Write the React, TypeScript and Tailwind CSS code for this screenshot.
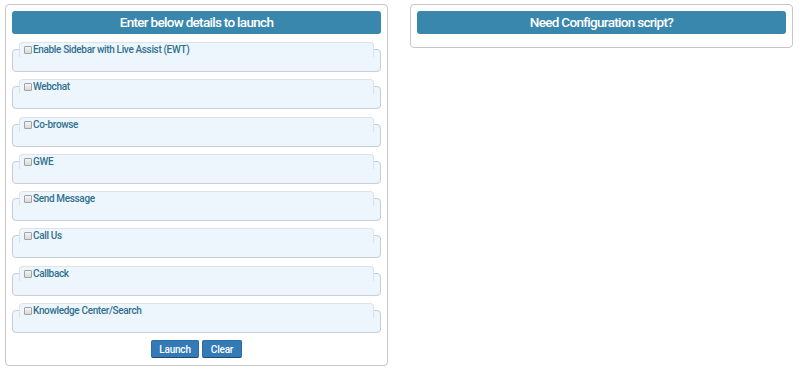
const options = [
  "Enable Sidebar with Live Assist (EWT)",
  "Webchat",
  "Co-browse",
  "GWE",
  "Send Message",
  "Call Us",
  "Callback",
  "Knowledge Center/Search",
];

function Option({ label }: { label: string }) {
  return (
    <fieldset className="mb-[7.3px] rounded-[4px] border border-[#c9ced3] bg-[#eef6fd] px-[6px]">
      <legend className="flex h-[15px] w-full items-start rounded-t-[4px] border border-b-0 border-[#dde3e8] bg-[#eef6fd] pl-[4px] pt-[1px]">
        <span className="mr-[1px] mt-[2px] h-[8px] w-[8px] rounded-[1px] border border-[#a3a3a3] bg-gradient-to-b from-[#f4f4f4] to-[#d9d9d9]" />
        <span className="text-[10px] font-medium leading-[12px] tracking-[-0.35px] text-[#31708f]">{label}</span>
      </legend>
      <div className="h-[14px]" />
    </fieldset>
  );
}

export default function App() {
  return (
    <div
      className="flex h-[372px] w-[800px] items-start gap-[22px] bg-white pl-[5px] pt-[4px]"
      style={{ fontFamily: "Roboto, 'Liberation Sans', sans-serif" }}
    >
      <div className="w-[383px] rounded-[4px] border border-[#c6c6c6] px-[6px] pb-[7px] pt-[6px]">
        <div className="flex h-[23px] items-center justify-center rounded-[3px] bg-[#3a87ad] text-[13.5px] font-medium tracking-[-0.7px] text-white">
          Enter below details to launch
        </div>
        <div className="mt-[8px]">
          {options.map((o) => (
            <Option key={o} label={o} />
          ))}
        </div>
        <div className="flex justify-center gap-[3px]">
          <button className="h-[18px] w-[48px] rounded-[2px] border border-[#2e6da4] border-b-[#1d4a73] bg-[#337ab7] text-[10px] font-medium tracking-[-0.2px] text-white">
            Launch
          </button>
          <button className="h-[18px] w-[40px] rounded-[2px] border border-[#2e6da4] border-b-[#1d4a73] bg-[#337ab7] text-[10px] font-medium tracking-[-0.2px] text-white">
            Clear
          </button>
        </div>
      </div>
      <div className="w-[383px] rounded-[4px] border border-[#c6c6c6] px-[6px] pb-[13px] pt-[6px]">
        <div className="flex h-[23px] items-center justify-center rounded-[3px] bg-[#3a87ad] text-[13.5px] font-medium tracking-[-0.7px] text-white">
          Need Configuration script?
        </div>
      </div>
    </div>
  );
}
